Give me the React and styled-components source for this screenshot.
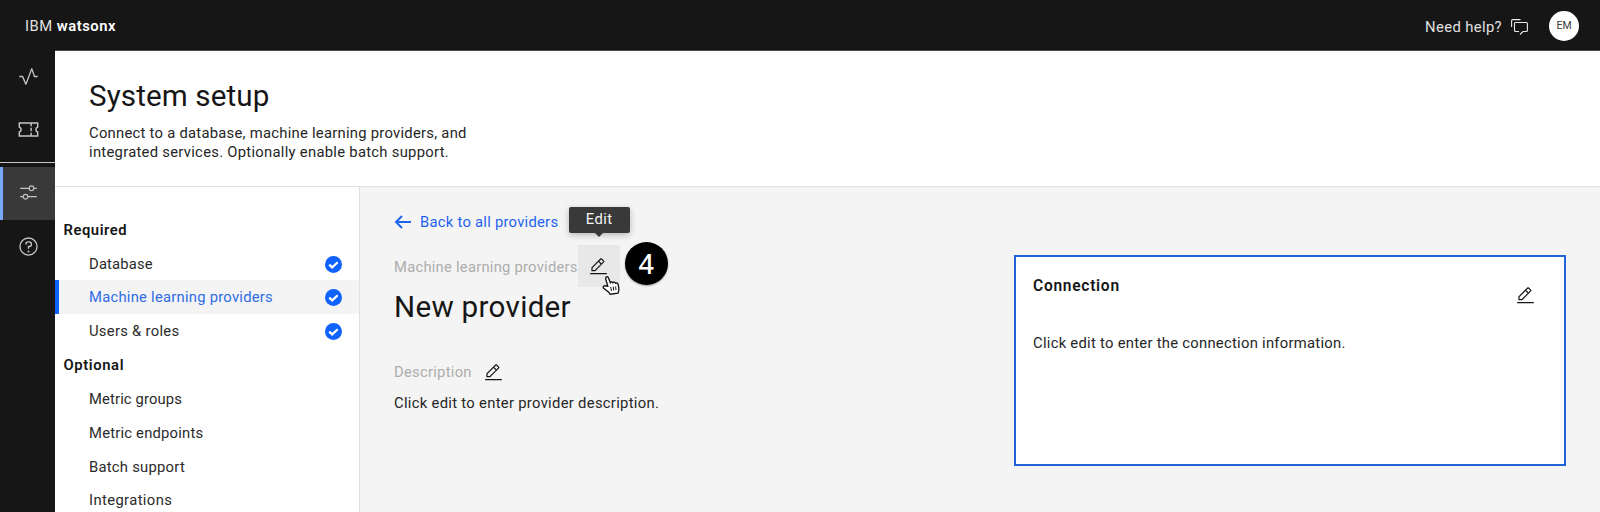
import React from "react";
import styled, { createGlobalStyle } from "styled-components";

const Global = createGlobalStyle`
  * { box-sizing: border-box; }
  body { margin: 0; background: #f4f4f4; }
  #root { height: 512px; overflow: hidden; }
`;

const Page = styled.div`
  height: 512px;
  display: flex;
  flex-direction: column;
  overflow: hidden;
  font-family: Roboto, "Noto Sans", sans-serif;
  font-size: 14.8px;
  line-height: 19px;
  color: #262626;
`;

const Label = styled.span`
  display: block;
  white-space: nowrap;
  letter-spacing: ${(p) => p.$track || 0}px;
`;

const TopBar = styled.header`
  flex: none;
  height: 51px;
  padding: 0 21px 0 25px;
  display: flex;
  align-items: center;
  justify-content: space-between;
  background: #161616;
  color: #f4f4f4;
`;

const Brand = styled(Label)`
  padding-top: 1px;
  color: #e0e0e0;
  b { font-weight: 600; color: #fff; }
`;

const HelpArea = styled.div`
  display: flex;
  align-items: center;
`;

const HelpLink = styled.div`
  display: flex;
  align-items: center;
  gap: 9px;
  padding-top: 3px;
  margin-right: 21px;
  color: #e0e0e0;
`;

const Avatar = styled.div`
  width: 30px;
  height: 30px;
  border-radius: 50%;
  background: #fff;
  color: #393939;
  font-size: 10.5px;
  line-height: 30px;
  text-align: center;
`;

const Body = styled.div`
  flex: 1;
  min-height: 0;
  display: flex;
`;

const Rail = styled.nav`
  flex: none;
  width: 55px;
  background: #161616;
  color: #c6c6c6;
  display: flex;
  flex-direction: column;
`;

const RailItem = styled.div`
  flex: none;
  height: ${(p) => p.$h || 53}px;
  display: flex;
  align-items: center;
  padding-left: ${(p) => (p.$active ? 16 : 18)}px;
  padding-bottom: 2px;
  background: ${(p) => (p.$active ? "#393939" : "transparent")};
  border-left: ${(p) => (p.$active ? "3px solid #78a9ff" : "0")};
`;

const RailDivider = styled.div`
  flex: none;
  height: 1px;
  background: #c6c6c6;
  margin: 5px 0 4px;
`;

const Main = styled.main`
  flex: 1;
  min-width: 0;
  display: flex;
  flex-direction: column;
  box-shadow: 0 -1px #4a4a4a;
`;

const PageHead = styled.section`
  flex: none;
  height: 136px;
  padding: 25px 0 0 34px;
  background: #fff;
  border-bottom: 1px solid #e0e0e0;
`;

const Title = styled.h1`
  margin: 0;
  font-weight: 400;
  font-size: 29.6px;
  line-height: 40px;
  color: #161616;
  white-space: nowrap;
  letter-spacing: ${(p) => p.$track || 0}px;
`;

const Intro = styled.div`
  margin-top: 8px;
`;

const Columns = styled.div`
  flex: 1;
  min-height: 0;
  display: flex;
`;

const SideNav = styled.aside`
  flex: none;
  width: 305px;
  padding-top: 25.3px;
  background: #fff;
  border-right: 1px solid #e0e0e0;
  overflow: hidden;
`;

const NavHeading = styled.div`
  height: 33.85px;
  padding: 2px 0 0 8.5px;
  display: flex;
  align-items: center;
  font-weight: 600;
  color: #161616;
`;

const NavRow = styled.div`
  height: 33.85px;
  padding: 2px 17px 0 ${(p) => (p.$active ? 30 : 34)}px;
  border-left: ${(p) => (p.$active ? "4px solid #0f62fe" : "0")};
  display: flex;
  align-items: center;
  justify-content: space-between;
  background: ${(p) => (p.$active ? "#f4f4f4" : "#fff")};
  color: ${(p) => (p.$active ? "#2f6ce5" : "#2b2b2b")};
`;

const Content = styled.section`
  flex: 1;
  min-width: 0;
  padding: 0 34px;
  display: flex;
  justify-content: space-between;
  background: #f4f4f4;
`;

const Details = styled.div`
  width: 300px;
  padding-top: 25px;
`;

const BackLink = styled.div`
  display: flex;
  align-items: center;
  height: 20px;
  gap: 8px;
  color: #1f63ee;
`;

const Crumb = styled.div`
  display: flex;
  align-items: center;
  height: 42px;
  margin-top: 13px;
  color: #adadad;
`;

const CrumbText = styled(Label)`
  padding-top: 2px;
`;

const EditButton = styled.div`
  position: relative;
  flex: none;
  width: 42px;
  height: 42px;
  padding: 1px 1px 0 0;
  display: flex;
  align-items: center;
  justify-content: center;
  background: #e8e8e8;
  color: #161616;
`;

const Tooltip = styled.div`
  position: absolute;
  left: -9px;
  top: -38px;
  width: 61px;
  height: 26px;
  border-radius: 2px;
  background: #393939;
  color: #f4f4f4;
  line-height: 25px;
  text-align: center;
  letter-spacing: 0.5px;
  box-shadow: 0 2px 6px rgba(0, 0, 0, 0.25);
  &::after {
    content: "";
    position: absolute;
    left: 26px;
    top: 26px;
    border: 4.5px solid transparent;
    border-top-color: #393939;
    border-bottom: 0;
  }
`;

const Pointer = styled.svg`
  position: absolute;
  left: 24px;
  top: 30px;
`;

const StepBadge = styled.div`
  flex: none;
  width: 43px;
  height: 43px;
  margin: -5px 0 0 5px;
  border-radius: 50%;
  background: #000;
  color: #fff;
  font-family: "Noto Sans", sans-serif;
  font-size: 27px;
  font-weight: 500;
  line-height: 43px;
  text-align: center;
  box-shadow: 0 1px 2px rgba(0, 0, 0, 0.35);
`;

const DescriptionHead = styled.div`
  display: flex;
  align-items: center;
  gap: 12px;
  height: 22px;
  margin-top: 34px;
  color: #adadad;
  svg { color: #161616; }
`;

const DescriptionText = styled.div`
  margin-top: 11px;
`;

const Card = styled.article`
  width: 552px;
  height: 211px;
  margin-top: 68px;
  padding: 20px 29px 0 17px;
  border: 2px solid #2063d8;
  background: #fff;
`;

const CardHead = styled.div`
  display: flex;
  justify-content: space-between;
  align-items: flex-start;
  height: 57px;
  font-size: 15.6px;
  font-weight: 600;
  color: #161616;
  svg { margin-top: 9px; }
`;

const Glyph = ({ size = 18, children }) => (
  <svg width={size} height={size} viewBox="0 0 32 32" fill="currentColor">
    {children}
  </svg>
);

const EditIcon = () => (
  <Glyph size={19}>
    <path d="M2 27h28v2H2zM25.4 9c.8-.8.8-2 0-2.8l-3.6-3.6c-.8-.8-2-.8-2.8 0l-15 15V24h6.4L25.4 9zM20.4 4 24 7.6l-3 3L17.4 7l3-3zM6 22v-3.6l10-10 3.6 3.6-10 10H6z" />
  </Glyph>
);

const ActivityIcon = () => (
  <Glyph size={21}>
    <path d="M12 29a1 1 0 0 1-.92-.62L6.33 17H2v-2h5a1 1 0 0 1 .92.62L12 25.28l8.06-21.63A1 1 0 0 1 21 3a1 1 0 0 1 .93.68L25.72 15H30v2h-5a1 1 0 0 1-.95-.68L21 7l-8.06 21.35A1 1 0 0 1 12 29z" />
  </Glyph>
);

const TicketIcon = () => (
  <Glyph size={21}>
    <path
      d="M2 6h28v6.2a4 4 0 0 0 0 7.6V26H2v-6.2a4 4 0 0 0 0-7.6z M20 6v5 M20 13.5v5 M20 21v5"
      fill="none"
      stroke="currentColor"
      strokeWidth="2.2"
    />
  </Glyph>
);

const AdjustIcon = () => (
  <Glyph size={19}>
    <path d="M30 8h-4.1a5 5 0 0 0-9.8 0H2v2h14.1a5 5 0 0 0 9.8 0H30V8zm-9 4a3 3 0 1 1 0-6 3 3 0 0 1 0 6zM2 24h4.1a5 5 0 0 0 9.8 0H30v-2H15.9a5 5 0 0 0-9.8 0H2v2zm9-4a3 3 0 1 1 0 6 3 3 0 0 1 0-6z" />
  </Glyph>
);

const QuestionIcon = () => (
  <Glyph size={21}>
    <path d="M16 2a14 14 0 1 0 14 14A14 14 0 0 0 16 2zm0 26a12 12 0 1 1 12-12 12 12 0 0 1-12 12z" />
    <path d="M17 8h-1.5a4.5 4.5 0 0 0-4.5 4.5v.5h2v-.5a2.5 2.5 0 0 1 2.5-2.5H17a2.5 2.5 0 0 1 0 5h-2v4.5h2V17a4.5 4.5 0 0 0 0-9z" />
    <circle cx="16" cy="23.5" r="1.5" />
  </Glyph>
);

const ArrowIcon = () => (
  <svg width="18" height="16" viewBox="0 0 18 16" fill="none" stroke="currentColor" strokeWidth="2">
    <path d="M17 8H1.800M8 2 2 8l6 6" />
  </svg>
);

const ChatIcon = () => (
  <svg width="17" height="16" viewBox="0 0 17 16" fill="none" stroke="#e8e8e8" strokeWidth="1.1">
    <path d="M.6 8V1.600a1 1 0 0 1 1-1H9.500M9 15.500l3-3h3.400a1 1 0 0 0 1-1v-7a1 1 0 0 0-1-1H4.500a1 1 0 0 0-1 1v7a1 1 0 0 0 1 1H8" />
  </svg>
);

const CheckIcon = () => (
  <svg width="17" height="17" viewBox="0 0 17 17">
    <circle cx="8.5" cy="8.5" r="8.5" fill="#0f62fe" />
    <path d="m4.200 8.600 3 2.800 5.500-5.200" fill="none" stroke="#fff" strokeWidth="2.2" />
  </svg>
);

const HandPointer = () => (
  <Pointer width="19" height="20" viewBox="0 0 19 20">
    <path
      d="M5.800 11.200 3.800 4.200C3.100 1.800 5.700.8 6.500 3l1.800 4.600c.6-1.100 2.300-1 2.700.1.800-.9 2.200-.6 2.600.5.900-.5 2.100-.1 2.400 1 .6 2.200 1.300 4.600.7 6.600l-.7 2.400-7.900 1-1.400-2-5-3.900c-1.300-1.300.3-3.100 2-2.300z"
      fill="#fff"
      stroke="#111"
      strokeWidth="1.3"
    />
    <path d="m8.700 12 .8 4M11.200 11.600l.6 3.900M13.600 11.500l.4 3.500" fill="none" stroke="#111" strokeWidth="1" />
  </Pointer>
);

const required = [
  { text: "Database", track: 0.17 },
  { text: "Machine learning providers", track: 0.24, active: true },
  { text: "Users & roles", track: 0.28 },
];

const optional = [
  { text: "Metric groups", track: 0.13 },
  { text: "Metric endpoints", track: 0.21 },
  { text: "Batch support", track: 0.25 },
  { text: "Integrations", track: 0.38 },
];

export default function App() {
  return (
    <Page>
      <Global />
      <TopBar>
        <Brand $track={0.5}>IBM <b>watsonx</b></Brand>
        <HelpArea>
          <HelpLink>
            <Label $track={0.38}>Need help?</Label>
            <ChatIcon />
          </HelpLink>
          <Avatar>EM</Avatar>
        </HelpArea>
      </TopBar>
      <Body>
        <Rail>
          <RailItem><ActivityIcon /></RailItem>
          <RailItem><TicketIcon /></RailItem>
          <RailDivider />
          <RailItem $active><AdjustIcon /></RailItem>
          <RailItem $h={54}><QuestionIcon /></RailItem>
        </Rail>
        <Main>
          <PageHead>
            <Title $track={0.12}>System setup</Title>
            <Intro>
              <Label $track={0.26}>Connect to a database, machine learning providers, and</Label>
              <Label $track={0.28}>integrated services. Optionally enable batch support.</Label>
            </Intro>
          </PageHead>
          <Columns>
            <SideNav>
              <NavHeading><Label $track={0.55}>Required</Label></NavHeading>
              {required.map((item) => (
                <NavRow key={item.text} $active={item.active}>
                  <Label $track={item.track}>{item.text}</Label>
                  <CheckIcon />
                </NavRow>
              ))}
              <NavHeading><Label $track={0.6}>Optional</Label></NavHeading>
              {optional.map((item) => (
                <NavRow key={item.text}>
                  <Label $track={item.track}>{item.text}</Label>
                </NavRow>
              ))}
            </SideNav>
            <Content>
              <Details>
                <BackLink>
                  <ArrowIcon />
                  <Label $track={0.25}>Back to all providers</Label>
                </BackLink>
                <Crumb>
                  <CrumbText $track={0.23}>Machine learning providers</CrumbText>
                  <EditButton>
                    <EditIcon />
                    <Tooltip>Edit</Tooltip>
                    <HandPointer />
                  </EditButton>
                  <StepBadge>4</StepBadge>
                </Crumb>
                <Title $track={0.3}>New provider</Title>
                <DescriptionHead>
                  <Label $track={0.26}>Description</Label>
                  <EditIcon />
                </DescriptionHead>
                <DescriptionText>
                  <Label $track={0.3}>Click edit to enter provider description.</Label>
                </DescriptionText>
              </Details>
              <Card>
                <CardHead>
                  <Label $track={0.7}>Connection</Label>
                  <EditIcon />
                </CardHead>
                <Label $track={0.27}>Click edit to enter the connection information.</Label>
              </Card>
            </Content>
          </Columns>
        </Main>
      </Body>
    </Page>
  );
}
